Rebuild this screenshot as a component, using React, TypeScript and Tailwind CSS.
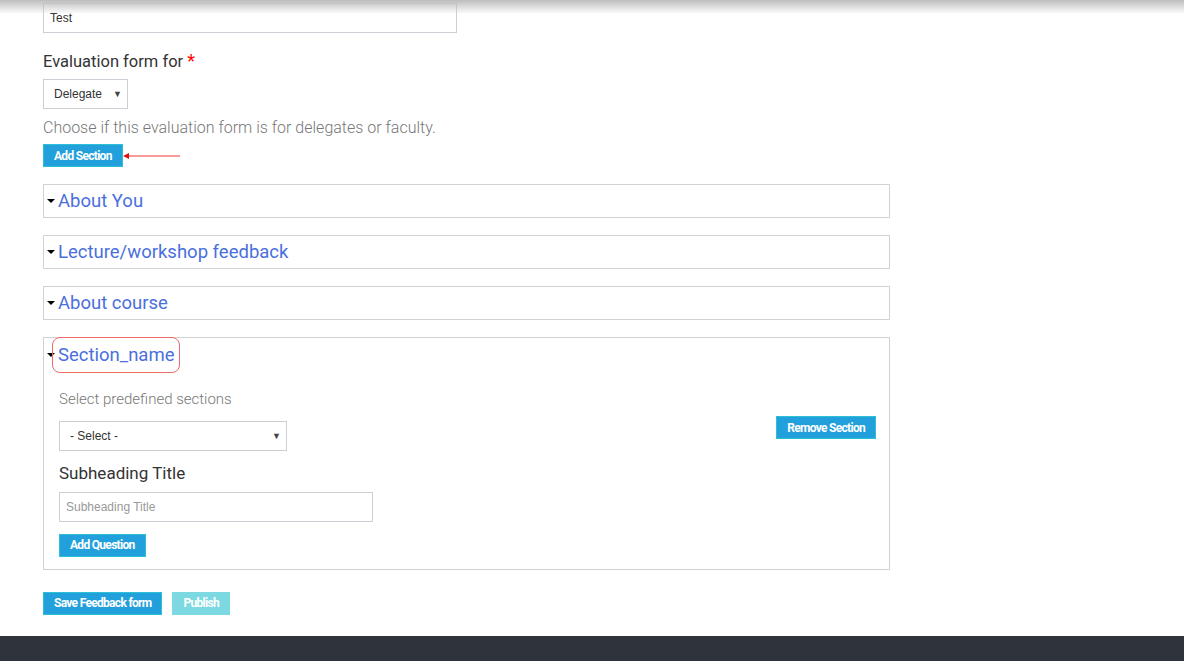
import React, { useState } from 'react';

const Btn: React.FC<{ children: React.ReactNode; className?: string }> = ({ children, className = '' }) => (
  <button
    type="button"
    className={`h-[23px] border border-[#2cc0d6] bg-[#22a0dc] px-[10px] text-[12px] font-bold leading-none tracking-[-0.7px] text-white ${className}`}
    style={{ fontFamily: 'Roboto, sans-serif' }}
  >
    {children}
  </button>
);

const Caret = () => (
  <span className="mr-[3px] inline-block h-0 w-0 border-x-[4px] border-t-[4px] border-x-transparent border-t-black" />
);

const Collapsed: React.FC<{ title: string }> = ({ title }) => (
  <div className="flex h-[34px] w-[847px] items-center border border-[#d2d2d2] pl-[3px]">
    <Caret />
    <span className="text-[18.5px] leading-none text-[#4a6fdd]">{title}</span>
  </div>
);

export default function App() {
  const [name, setName] = useState('Test');
  const [who, setWho] = useState('Delegate');
  const [sub, setSub] = useState('');

  return (
    <div className="relative flex min-h-[661px] flex-col bg-white" style={{ fontFamily: 'Roboto, sans-serif' }}>
      <div className="pointer-events-none absolute inset-x-0 top-0 h-[14px] bg-gradient-to-b from-[#bdbdbd] to-transparent" />
      <main className="flex flex-1 flex-col pl-[43px] pt-[3px]">
        <input
          value={name}
          onChange={(e) => setName(e.target.value)}
          className="h-[30px] w-[414px] border border-[#ccd0d6] px-[6px] text-[12px] text-[#333] outline-none"
          style={{ fontFamily: '"Liberation Sans", Arial, sans-serif' }}
        />

        <label className="mt-[17px] text-[16.5px] leading-[22px] text-[#333]">
          Evaluation form for <span className="text-[18px] text-[#f00]">*</span>
        </label>
        <div className="relative mt-[6px] w-[85px]">
          <select
            value={who}
            onChange={(e) => setWho(e.target.value)}
            className="h-[30px] w-[85px] appearance-none border border-[#ccd0d6] bg-white pl-[10px] text-[12px] text-[#333] outline-none"
            style={{ fontFamily: '"Liberation Sans", Arial, sans-serif' }}
          >
            <option>Delegate</option>
            <option>Faculty</option>
          </select>
          <span className="pointer-events-none absolute right-[6px] top-[11px] text-[9px] leading-none text-[#444]">▼</span>
        </div>
        <p className="mt-[9px] text-[16px] font-light leading-[20px] text-[#777]">
          Choose if this evaluation form is for delegates or faculty.
        </p>

        <div className="relative mt-[6px] flex items-center">
          <Btn>Add Section</Btn>
          <svg width="60" height="8" viewBox="0 0 60 8">
            <line x1="4" y1="4" x2="57" y2="4" stroke="#f47a7a" strokeWidth="1.5" />
            <path d="M0 4 L6 1 L6 7 Z" fill="#e01010" />
          </svg>
        </div>

        <div className="mt-[17px] flex flex-col gap-[17px]">
          <Collapsed title="About You" />
          <Collapsed title="Lecture/workshop feedback" />
          <Collapsed title="About course" />

          <div className="w-[847px] border border-[#d2d2d2] pb-[12px] pl-[3px] pr-[13px]">
            <div className="flex h-[34px] items-center">
              <Caret />
              <span className="relative -ml-[6px] rounded-[8px] border border-[#f06a6a] px-[5px] py-[8px] text-[18.5px] leading-none text-[#4a6fdd]">
                Section_name
              </span>
            </div>
            <div className="flex items-start justify-between pl-[12px]">
              <div className="flex flex-col">
                <span className="mt-[17px] text-[15px] font-light leading-[20px] text-[#777]">Select predefined sections</span>
                <div className="relative mt-[12px] w-[228px]">
                  <select
                    className="h-[30px] w-[228px] appearance-none border border-[#ccd0d6] bg-white pl-[10px] text-[12px] text-[#333] outline-none"
                    style={{ fontFamily: '"Liberation Sans", Arial, sans-serif' }}
                  >
                    <option>- Select -</option>
                  </select>
                  <span className="pointer-events-none absolute right-[6px] top-[11px] text-[9px] leading-none text-[#444]">▼</span>
                </div>
              </div>
              <Btn className="mt-[44px]">Remove Section</Btn>
            </div>
            <div className="flex flex-col pl-[12px]">
              <span className="mt-[11px] text-[17px] leading-[22px] text-[#333]">Subheading Title</span>
              <input
                value={sub}
                onChange={(e) => setSub(e.target.value)}
                placeholder="Subheading Title"
                className="mt-[8px] h-[30px] w-[314px] border border-[#ccd0d6] px-[6px] text-[12px] text-[#333] outline-none placeholder:text-[#999]"
                style={{ fontFamily: '"Liberation Sans", Arial, sans-serif' }}
              />
              <div className="mt-[10px]">
                <Btn>Add Question</Btn>
              </div>
            </div>
          </div>
        </div>

        <div className="mt-[22px] flex gap-[10px]">
          <Btn>Save Feedback form</Btn>
          <button
            type="button"
            className="h-[23px] bg-[#7cd9e1] px-[11px] text-[12px] font-bold leading-none tracking-[-0.7px] text-white"
          >
            Publish
          </button>
        </div>
      </main>
      <footer className="mt-[20px] h-[25px] bg-[#2f333b]" />
    </div>
  );
}
